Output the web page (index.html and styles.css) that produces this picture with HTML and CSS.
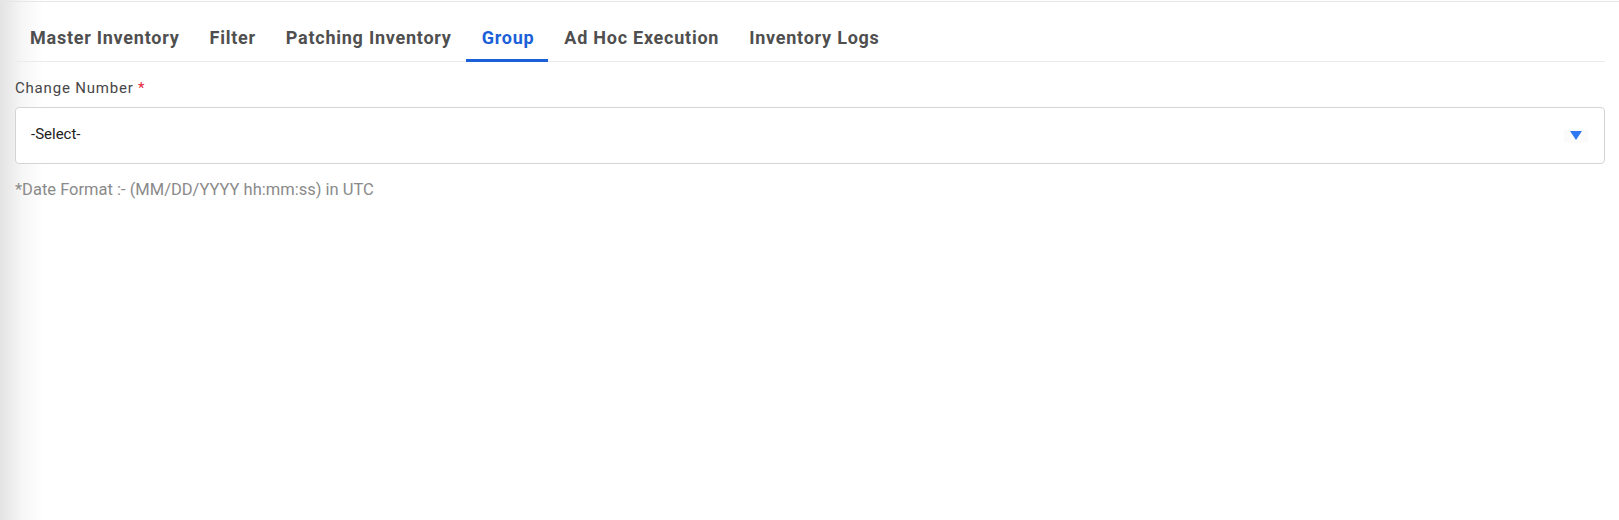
FILE: index.html
```html
<!DOCTYPE html>
<html lang="en">
<head>
<meta charset="utf-8">
<title>Group</title>
<link rel="stylesheet" href="styles.css">
</head>
<body>
<div class="page">
  <nav class="tabs">
    <div class="tab">Master Inventory</div>
    <div class="tab">Filter</div>
    <div class="tab">Patching Inventory</div>
    <div class="tab active">Group</div>
    <div class="tab">Ad Hoc Execution</div>
    <div class="tab">Inventory Logs</div>
  </nav>
  <div class="field">
    <label class="label">Change Number <span class="req">*</span></label>
    <div class="select">
      <span class="select-text">-Select-</span>
      <span class="arrow"><svg width="12" height="9" viewBox="0 0 12 9"><path d="M0 0H12L6 9Z" fill="#2f78f0"/></svg></span>
    </div>
  </div>
  <p class="hint">*Date Format :- (MM/DD/YYYY hh:mm:ss) in UTC</p>
</div>
</body>
</html>
```
FILE: styles.css
```css
html, body {
  margin: 0;
  height: 100%;
}
body {
  background: linear-gradient(to right, #e3e3e3 0px, #f6f6f6 22px, #ffffff 44px);
  font-family: Roboto, "Liberation Sans", Arial, sans-serif;
  padding-top: 1px;
  box-sizing: border-box;
}
.page {
  border-top: 1px solid #e6e6e6;
  padding: 0 14px 0 14px;
}
.tabs {
  display: flex;
  border-bottom: 1px solid #ebebeb;
}
.tab {
  height: 60px;
  box-sizing: border-box;
  padding: 24px 14px 0 16px;
  line-height: 24px;
  font-size: 18px;
  font-weight: 700;
  letter-spacing: 0.75px;
  color: #4f4f4f;
  border-bottom: 3px solid transparent;
  margin-bottom: -1px;
}
.tab.active {
  color: #1b5fd9;
  border-bottom-color: #1b5fd9;
}
.field {
  display: flex;
  flex-direction: column;
  margin-top: 16px;
}
.label {
  font-size: 15px;
  line-height: 20px;
  letter-spacing: 0.8px;
  color: #464646;
  padding-left: 1px;
}
.req {
  color: #e5243b;
}
.select {
  margin-top: 9px;
  margin-left: 1px;
  height: 57px;
  box-sizing: border-box;
  border: 1px solid #d2d4d8;
  border-radius: 4px;
  background: #fff;
  display: flex;
  align-items: center;
  padding: 0 16px 4px 15px;
}
.select-text {
  flex: 1;
  font-size: 15px;
  color: #212121;
}
.arrow {
  display: flex;
  align-items: center;
  justify-content: center;
  width: 24px;
  height: 14px;
  margin-top: 4px;
  background: #fbfbfb;
}
.hint {
  margin: 16px 0 0 1px;
  font-size: 16.5px;
  line-height: 20px;
  color: #8a8a8a;
}
```
